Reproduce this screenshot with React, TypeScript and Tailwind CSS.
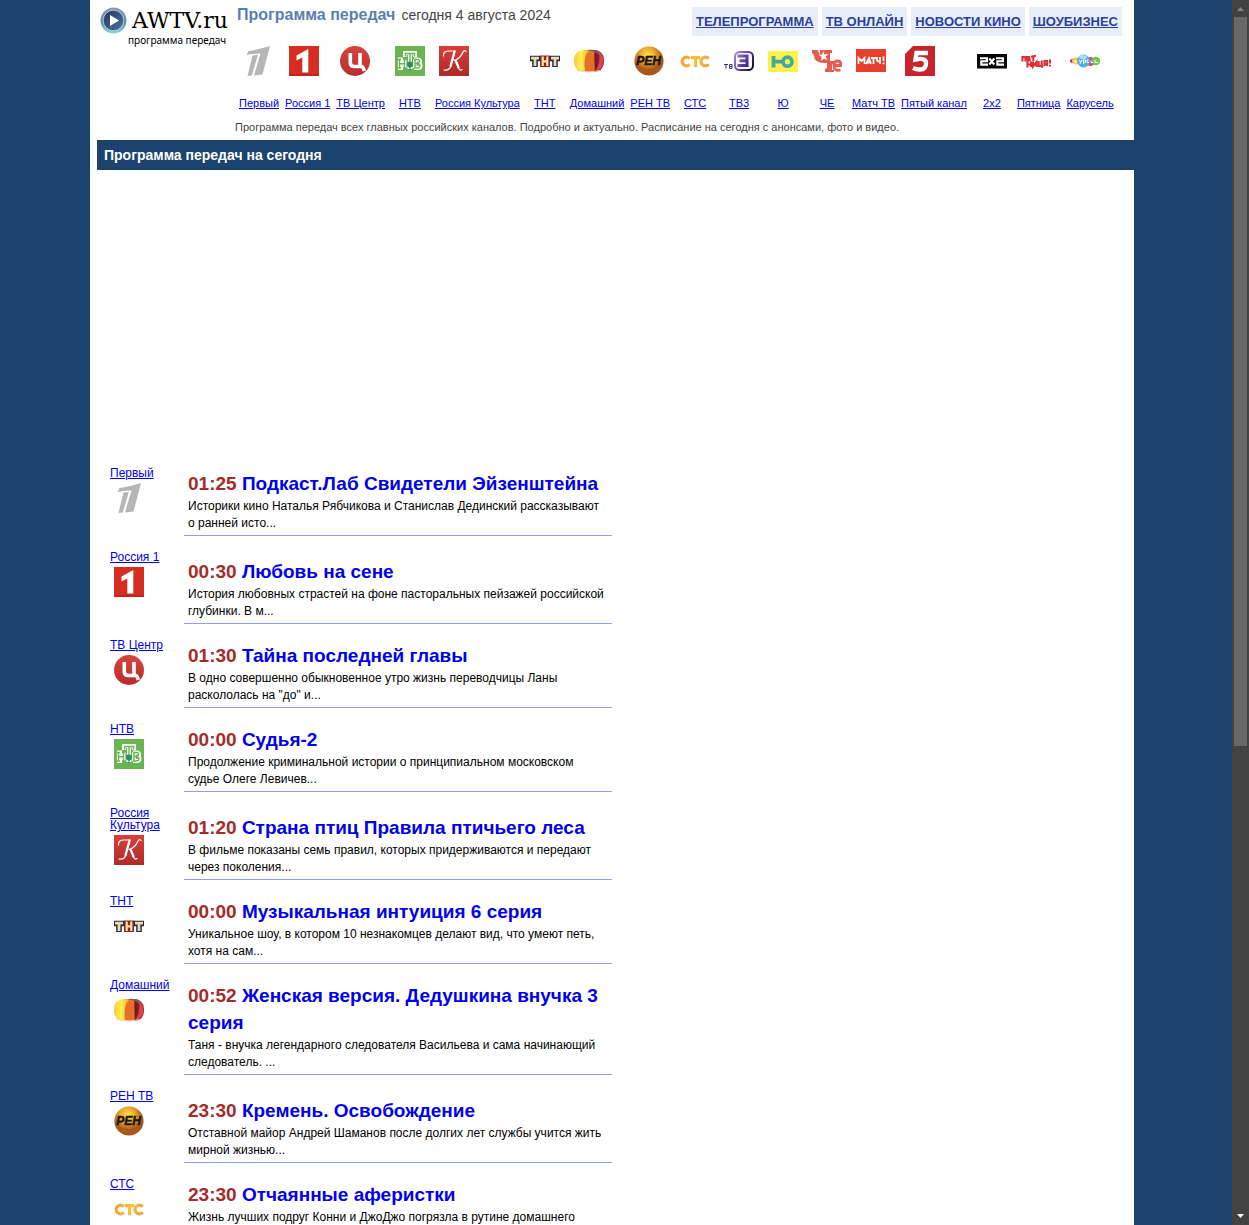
import React from "react";

const serif = '"DejaVu Serif", serif';
const sans = '"Liberation Sans", Arial, sans-serif';

function Logo({ id, prefix }: { id: string; prefix: string }) {
  const g = `${prefix}-${id}`;
  const url = (n: string) => `url(#${g}-${n})`;
  const art: Record<string, React.ReactNode> = {
    perviy: (
      <g fill="#b6b6b6">
        <path d="M3.500 9 5.500 5Q14 3.800 27 0L19.500 28.500 11 29.500 17.500 7.600Q9 8 3.500 9Z" />
        <path d="M9.500 9.500 15 8.700 8.800 29.500 4.500 30Z" />
        <path d="M15.800 9 9.800 29.500" stroke="#fff" strokeWidth="1" />
      </g>
    ),
    russia1: (
      <>
        <rect width="30" height="30" fill="#d62d20" />
        <rect y="28" width="30" height="2" fill="#b9281e" />
        <path d="M7.500 9.500 19.300 3V26.500h-6V11.500L7.500 14.500Z" fill="#fff" />
      </>
    ),
    tvc: (
      <>
        <defs>
          <linearGradient id={`${g}-a`} x2="0" y2="1">
            <stop stopColor="#d84540" />
            <stop offset="1" stopColor="#b82c2c" />
          </linearGradient>
        </defs>
        <circle cx="15" cy="15" r="15" fill={url("a")} />
        <path d="M10.300 7v9.500q0 4 4 4h7.500q1.500.5 2.500 4.500M20 7v13" fill="none" stroke="#fff" strokeWidth="3.600" />
      </>
    ),
    ntv: (
      <>
        <rect width="30" height="30" fill="#6ab552" />
        <g stroke="#fff" strokeWidth="3.800" fill="#fff">
          <path d="M3 13.500h5M3 22h5M4.800 13v9M4.800 17.800h5M9.500 13v9M20 13v9M19 13.500h4q3 0 2 4 2 4.500-2 4.500h-4M10 11V7h10v4M15 7v14M12.500 21h5" fill="none" />
        </g>
        <g stroke="#6ab552" strokeWidth="1.400" fill="none">
          <path d="M2.500 13.500h3.500M2.500 22h3.500M4.500 13.500V22M4.500 17.800h5M9.500 13.500V22M8 13.500h3M8 22h3M20 13.500V22M19 13.500h3q3 0 2.500 2-.5 2-4.500 2 5 0 5 2.200t-3 2.300h-3M10.500 10.500V7.500h9v3M15 7.500v14" />
        </g>
        <circle cx="15" cy="18.500" r="3" fill="#2b8a72" />
        <path d="M15 20v5" stroke="#2b8a72" />
      </>
    ),
    kultura: (
      <>
        <defs>
          <linearGradient id={`${g}-a`} x2="0" y2="1">
            <stop stopColor="#dc3f3a" />
            <stop offset="1" stopColor="#aa2b27" />
          </linearGradient>
        </defs>
        <rect width="30" height="30" fill={url("a")} />
        <g fill="none" stroke="#fff" strokeLinecap="round">
          <path d="M4.500 10Q4 5 10 5h6L12 20q-2 5-7 4M15 14.500Q21 13 24 6q1.500-2.500 3-.5M15 14.500q3 0 4 5.500t4 3.500" strokeWidth="1.200" />
          <path d="M15.500 5.500 11.500 20M17 15.500l2.500 6" strokeWidth="2.200" />
        </g>
      </>
    ),
    tnt: (
      <g fill="none">
        <path d="M0 12.500h10M5 12.500V21M20 12.500h10M25 12.500V21" stroke="#1e2758" strokeWidth="5.600" />
        <rect x="10" y="9.500" width="10" height="11.500" fill="#8e2420" />
        <path d="M1 12.200h8M5 12V20M21 12.200h8M25 12V20" stroke="#e9dda0" strokeWidth="2.800" />
        <path d="M12.700 10.500v9.500M17.300 10.500v9.500M12.500 15.300h5" stroke="#f5e8a5" strokeWidth="2.200" />
      </g>
    ),
    domashniy: (
      <>
        <defs>
          <linearGradient id={`${g}-a`}>
            <stop stopColor="#fbc93a" />
            <stop offset=".25" stopColor="#fff04d" />
            <stop offset=".4" stopColor="#f8c838" />
            <stop offset=".65" stopColor="#ef7820" />
            <stop offset=".7" stopColor="#731522" />
            <stop offset="1" stopColor="#b12a36" />
          </linearGradient>
        </defs>
        <rect y="4" width="30" height="22" rx="9.500" fill={url("a")} />
        <path d="M11 25.500Q9 8 15.500 5q5.500 2 5 20Z" fill="#e4702a" />
        <path d="M13 4q9-1 13 2l2 6q-4-6-12-7Z" fill="#7d5b58" />
        <path d="M28 9q3 8-1 13.500l-6 3q6-8 4-19Z" fill="#dc4450" />
        <path d="M3 24.500q12 3 24 0" stroke="#f6cdb1" fill="none" />
      </>
    ),
    ren: (
      <>
        <defs>
          <radialGradient id={`${g}-a`} cx=".45" cy=".3">
            <stop stopColor="#ffe34a" />
            <stop offset=".55" stopColor="#e8a42b" />
            <stop offset="1" stopColor="#a9581c" />
          </radialGradient>
        </defs>
        <circle cx="15" cy="15" r="14.600" fill={url("a")} />
        <text x="14.500" y="19" textAnchor="middle" fontFamily={sans} fontSize="12" fontWeight="700" fontStyle="italic" fill="#181410" stroke="#181410" strokeWidth=".5">
          РЕН
        </text>
      </>
    ),
    sts: (
      <>
        <defs>
          <linearGradient id={`${g}-a`} gradientUnits="userSpaceOnUse" x1="0" y1="10" x2="30" y2="20">
            <stop stopColor="#ee9b3c" />
            <stop offset=".5" stopColor="#f6c43c" />
            <stop offset="1" stopColor="#ee9d3e" />
          </linearGradient>
        </defs>
        <path
          d="M9.800 12.800A4.300 4.300 0 1 0 9.800 18.200M11 11.600h9M15.500 11.600V21.300M28.600 12.800A4.300 4.300 0 1 0 28.600 18.200"
          fill="none"
          stroke={url("a")}
          strokeWidth="3.200"
        />
      </>
    ),
    tv3: (
      <>
        <defs>
          <linearGradient id={`${g}-a`} gradientUnits="userSpaceOnUse" x1="10" y1="8" x2="30" y2="20">
            <stop stopColor="#a890d2" />
            <stop offset=".6" stopColor="#553693" />
            <stop offset="1" stopColor="#16112d" />
          </linearGradient>
        </defs>
        <path d="M0 18.500h4M2 18.500v4M5.500 18.500H8v4H5.500ZM5.500 20.500H8" stroke="#3a3258" fill="none" />
        <rect x="11" y="6" width="18" height="18" rx="4.500" fill="#f6f3fb" stroke={url("a")} strokeWidth="2" />
        <path d="M13.500 10h9.500v9.500H13.500M15.500 14.800h7" fill="none" stroke={url("a")} strokeWidth="3" />
      </>
    ),
    yu: (
      <>
        <rect y="5" width="30" height="21" rx="1" fill="#fff04a" />
        <path d="M5.500 10v11.500M5.500 15.700h9" stroke="#43aaa0" strokeWidth="3.800" />
        <circle cx="19.500" cy="15.700" r="4.500" stroke="#43aaa0" strokeWidth="3.800" fill="none" />
      </>
    ),
    che: (
      <>
        <path d="M0 4h6v2l2 2V4h12v3h-2v8h4v3h-2v6h2v2h-9v-3l2-1v-5Q2 18 2 9L0 7Z" fill="#e65b4e" />
        <path d="m11 5 1.500 3.500 4-.5-3 2.600 2 3.800-3.500-2-3 2.600.7-4-3.200-2.200 3.800-.3Z" fill="#fff" />
        <path d="M28.500 24q-6.500 1.500-6.500-4.500 0-4.500 3.500-4.500t3.500 4.500h-6" fill="none" stroke="#e65b4e" strokeWidth="2.800" />
      </>
    ),
    match: (
      <>
        <rect y="3" width="30" height="23" fill="#e4402b" />
        <path d="M2.500 18v-6l3 3 3-3v6M10 18l3-6 2 6M11 16.500h4M15 12h5M17.500 12v6M21 11v3q0 1.500 2.500 1.500M24 11v7M27.500 10.500v4.500M27.500 16.500v1.700" fill="none" stroke="#fff" strokeWidth="1.800" />
      </>
    ),
    five: (
      <>
        <path d="M8 0H30V30H0V8Z" fill="#c5252b" />
        <path d="M23 7H11.500l-1 6.500q10-2 10.500 3 .5 7-6 7-4 0-7-1.500" fill="none" stroke="#fff" strokeWidth="4.400" />
      </>
    ),
    twox: (
      <>
        <rect y="8" width="30" height="14.500" fill="#050505" />
        <path d="M3 12.300H10v3H4.300v3.300H11M19 12.300H26v3h-5.700v3.300H27M12.300 12.500l5 6M17.300 12.500l-5 6" fill="none" stroke="#fff" strokeWidth="2.100" />
      </>
    ),
    pyatnica: (
      <g fill="none" stroke="#dc2e39" strokeWidth="2.100">
        <path d="M1.500 15.500v-4.500h3v4.500M6.500 15.500l2-4.500v4.500M6.500 14v-3h2.500M10 10.800l5-1M12.300 10v5M6.500 15.500v6M10 15.500V21M6.500 18.500h4M12 15.500v5l3.500-4.500v5M17.700 15v5h3.500v1.700M20.700 14.500v5M23.500 20v-5h2.500v5M23.500 18h2.500M29 13.500v4M29 18.700v1.800" />
      </g>
    ),
    karusel: (
      <>
        <path d="M0 13.500v3M2.500 13 1 15l1.500 2" stroke="#cf2868" strokeWidth="1.300" fill="none" />
        <circle cx="6" cy="15" r="3.500" fill="#f7c63d" />
        <circle cx="20.500" cy="15.500" r="4.500" fill="#dc4884" />
        <circle cx="26" cy="15" r="4.300" fill="#70c94e" />
        <ellipse cx="13.500" cy="15" rx="6.300" ry="6.500" fill="#50aee1" />
        <ellipse cx="13" cy="11" rx="4" ry="2" fill="#a9def5" />
        <path d="M5 14v2.500l2-1M9 14l1.500 2 1.500-2-2 4M13.500 18v-4h2v2.300h-2M18.500 14h-1.500v2.500H19M21 14.500v2h2M25 14v2.500h3" stroke="#fff" strokeWidth="1" fill="none" />
      </>
    ),
  };
  return (
    <svg viewBox="0 0 30 30" className="block size-[30px] shrink-0" aria-hidden="true">
      {art[id]}
    </svg>
  );
}

const channels: [string, string][] = [
  ["perviy", "Первый"],
  ["russia1", "Россия 1"],
  ["tvc", "ТВ Центр"],
  ["ntv", "НТВ"],
  ["kultura", "Россия Культура"],
  ["tnt", "ТНТ"],
  ["domashniy", "Домашний"],
  ["ren", "РЕН ТВ"],
  ["sts", "СТС"],
  ["tv3", "ТВ3"],
  ["yu", "Ю"],
  ["che", "ЧЕ"],
  ["match", "Матч ТВ"],
  ["five", "Пятый канал"],
  ["twox", "2x2"],
  ["pyatnica", "Пятница"],
  ["karusel", "Карусель"],
];

type Show = { logo: string; channel: string; time: string; title: string; text: string; roomy?: boolean };

const shows: Show[] = [
  { logo: "perviy", channel: "Первый", time: "01:25", title: "Подкаст.Лаб Свидетели Эйзенштейна", text: "Историки кино Наталья Рябчикова и Станислав Дединский рассказывают о ранней исто..." },
  { logo: "russia1", channel: "Россия 1", time: "00:30", title: "Любовь на сене", text: "История любовных страстей на фоне пасторальных пейзажей российской глубинки. В м...", roomy: true },
  { logo: "tvc", channel: "ТВ Центр", time: "01:30", title: "Тайна последней главы", text: "В одно совершенно обыкновенное утро жизнь переводчицы Ланы раскололась на \"до\" и..." },
  { logo: "ntv", channel: "НТВ", time: "00:00", title: "Судья-2", text: "Продолжение криминальной истории о принципиальном московском судье Олеге Левичев..." },
  { logo: "kultura", channel: "Россия Культура", time: "01:20", title: "Страна птиц Правила птичьего леса", text: "В фильме показаны семь правил, которых придерживаются и передают через поколения...", roomy: true },
  { logo: "tnt", channel: "ТНТ", time: "00:00", title: "Музыкальная интуиция 6 серия", text: "Уникальное шоу, в котором 10 незнакомцев делают вид, что умеют петь, хотя на сам..." },
  { logo: "domashniy", channel: "Домашний", time: "00:52", title: "Женская версия. Дедушкина внучка 3 серия", text: "Таня - внучка легендарного следователя Васильева и сама начинающий следователь. ..." },
  { logo: "ren", channel: "РЕН ТВ", time: "23:30", title: "Кремень. Освобождение", text: "Отставной майор Андрей Шаманов после долгих лет службы учится жить мирной жизнью...", roomy: true },
  { logo: "sts", channel: "СТС", time: "23:30", title: "Отчаянные аферистки", text: "Жизнь лучших подруг Конни и ДжоДжо погрязла в рутине домашнего" },
];

const sections = ["ТЕЛЕПРОГРАММА", "ТВ ОНЛАЙН", "НОВОСТИ КИНО", "ШОУБИЗНЕС"];

function Brand() {
  return (
    <a href="#" aria-label="AWTV.ru" className="block w-[138px] shrink-0 pt-[7px] pl-[10px] text-black">
      <span className="flex items-center gap-[5px]">
        <svg viewBox="0 0 27 27" className="size-[27px] shrink-0" aria-hidden="true">
          <defs>
            <linearGradient id="brand-ring" x2="0" y2="1">
              <stop stopColor="#8c9cae" />
              <stop offset=".6" stopColor="#5796ac" />
              <stop offset="1" stopColor="#8dd4dc" />
            </linearGradient>
            <linearGradient id="brand-disc" x2="1" y2="1">
              <stop stopColor="#262d62" />
              <stop offset="1" stopColor="#4a7ca0" />
            </linearGradient>
          </defs>
          <circle cx="13.500" cy="13.500" r="13" fill="url(#brand-ring)" />
          <circle cx="13.500" cy="13.500" r="10.300" fill="url(#brand-disc)" stroke="#c9dce5" strokeWidth=".8" />
          <path d="M10 8v11l9-5.500Z" fill="#fff" />
        </svg>
        <span className="text-[22px] leading-[27px] whitespace-nowrap" style={{ fontFamily: serif }}>
          AWTV.ru
        </span>
      </span>
      <span className="block pl-7 font-['Noto_Sans',sans-serif] text-[10px] leading-[12px] whitespace-nowrap">
        программа передач
      </span>
    </a>
  );
}

function ShowRow({ show }: { show: Show }) {
  return (
    <article className="mb-[15px] flex">
      <div className="w-[74px] shrink-0 pr-2 text-[12px] leading-[12px]">
        <a href="#" className="block text-[#0000ee] underline">
          {show.channel}
        </a>
        <div className="pt-1 pl-1">
          <Logo id={show.logo} prefix="row" />
        </div>
      </div>
      <div className={`w-full max-w-[428px] border-b border-[#9999ee] px-1 pb-[3px] ${show.roomy ? "pt-[7px]" : "pt-[3px]"}`}>
        <h2 className="pb-px text-[19px] leading-[27px] font-bold text-[#a52a2a]">
          {show.time}{" "}
          <a href="#" className="text-[#0000ee]">
            {show.title}
          </a>
        </h2>
        <p className="text-[12px] leading-[17px] text-black">{show.text}</p>
      </div>
    </article>
  );
}

function ScrollRail() {
  return (
    <div className="flex w-[17px] shrink-0 flex-col bg-[#424242]" aria-hidden="true">
      <svg viewBox="0 0 17 17" className="size-[17px] shrink-0">
        <path d="M5 11 8.500 7 12 11Z" fill="#868686" />
      </svg>
      <div className="mx-[2px] grow-[729] basis-0 bg-[#686868]" />
      <div className="grow-[462] basis-0" />
      <svg viewBox="0 0 17 17" className="size-[17px] shrink-0">
        <path d="M5 6 8.500 10 12 6Z" fill="#fff" />
      </svg>
    </div>
  );
}

export default function App() {
  return (
    <div className="flex h-screen overflow-hidden bg-[#1b436d] font-['Liberation_Sans',Arial,sans-serif]">
      <div className="flex min-w-0 flex-1 justify-center overflow-hidden pr-2">
        <main className="min-h-full w-full max-w-[1044px] bg-white pl-[7px]">
          <div className="-ml-[7px] flex h-[140px] items-start">
            <Brand />
            <header className="min-w-0 flex-1 pl-[7px]">
              <div className="flex items-start justify-between pr-3">
                <div className="flex items-baseline gap-[6px] pt-[5px] pl-[2px]">
                  <h1 className="text-[16px] leading-5 font-bold text-[#5b7db1]">Программа передач</h1>
                  <span className="text-[14px] leading-5 text-[#444444]">сегодня 4 августа 2024</span>
                </div>
                <nav className="flex gap-1 pt-[7px]">
                  {sections.map((s) => (
                    <a key={s} href="#" className="block bg-[#e7eef8] px-1 text-[13px] leading-[29px] font-bold whitespace-nowrap text-[#2b3f9b] underline">
                      {s}
                    </a>
                  ))}
                </nav>
              </div>
              <nav className="flex gap-[6px] pt-[10px] pl-1">
                {channels.map(([id, name]) => (
                  <div key={id} className="flex min-w-[38px] flex-col gap-[20px]">
                    <div className="px-1">
                      <Logo id={id} prefix="top" />
                    </div>
                    <a href="#" className="text-center text-[11px] leading-[14px] whitespace-nowrap text-[#0000ee] underline">
                      {name}
                    </a>
                  </div>
                ))}
              </nav>
              <p className="pt-[10px] text-[11px] leading-[14px] text-[#444444]">
                Программа передач всех главных российских каналов. Подробно и актуально. Расписание на сегодня с анонсами, фото и видео.
              </p>
            </header>
          </div>
          <h2 className="bg-[#1b436d] pl-[7px] text-[14px] leading-[30px] font-bold text-white">Программа передач на сегодня</h2>
          <div className="h-[297px]" />
          <section className="pl-[13px]">
            {shows.map((s) => (
              <ShowRow key={s.channel} show={s} />
            ))}
          </section>
        </main>
      </div>
      <ScrollRail />
    </div>
  );
}
